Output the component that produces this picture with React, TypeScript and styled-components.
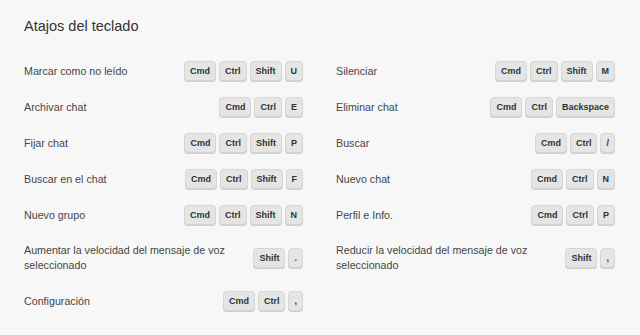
import styled, { createGlobalStyle } from 'styled-components'

const GlobalStyle = createGlobalStyle`
  html, body {
    margin: 0;
    padding: 0;
    background-color: #f7f7f7;
  }
  body {
    font-family: "Liberation Sans", Arial, sans-serif;
    -webkit-font-smoothing: antialiased;
  }
`

const Page = styled.div`
  min-height: 100vh;
  padding: 16px 25px 0 24px;
  box-sizing: border-box;
  background-color: #f7f7f7;
`

const Title = styled.h2`
  margin: 0 0 17px;
  font-size: 14.5px;
  line-height: 20px;
  font-weight: 400;
  color: #333;
`

const Grid = styled.div`
  display: grid;
  grid-template-columns: 279px 279px;
  column-gap: 33px;
`

const Row = styled.div`
  display: flex;
  align-items: center;
  justify-content: space-between;
  gap: 16px;
  padding: 8px 0;
`

const Label = styled.span`
  flex: 1;
  padding: 2px 0;
  font-size: 10.7px;
  line-height: 15px;
  color: #464646;
`

const Keys = styled.div`
  display: flex;
  flex-shrink: 0;
  gap: 3px;
`

const Key = styled.kbd`
  display: inline-flex;
  align-items: center;
  justify-content: center;
  height: 20px;
  padding: 0 5px;
  box-sizing: border-box;
  font-family: "Liberation Sans", Arial, sans-serif;
  font-size: 9px;
  font-weight: 700;
  color: #333;
  background-color: #e5e5e5;
  border: 1px solid #d6d6d6;
  border-radius: 4px;
  box-shadow: 0 1px 0 #cdcdcd;
`

type Shortcut = { label: string; keys: string[] }

const shortcuts: (Shortcut | null)[] = [
  { label: 'Marcar como no leído', keys: ['Cmd', 'Ctrl', 'Shift', 'U'] },
  { label: 'Silenciar', keys: ['Cmd', 'Ctrl', 'Shift', 'M'] },
  { label: 'Archivar chat', keys: ['Cmd', 'Ctrl', 'E'] },
  { label: 'Eliminar chat', keys: ['Cmd', 'Ctrl', 'Backspace'] },
  { label: 'Fijar chat', keys: ['Cmd', 'Ctrl', 'Shift', 'P'] },
  { label: 'Buscar', keys: ['Cmd', 'Ctrl', '/'] },
  { label: 'Buscar en el chat', keys: ['Cmd', 'Ctrl', 'Shift', 'F'] },
  { label: 'Nuevo chat', keys: ['Cmd', 'Ctrl', 'N'] },
  { label: 'Nuevo grupo', keys: ['Cmd', 'Ctrl', 'Shift', 'N'] },
  { label: 'Perfil e Info.', keys: ['Cmd', 'Ctrl', 'P'] },
  { label: 'Aumentar la velocidad del mensaje de voz seleccionado', keys: ['Shift', '.'] },
  { label: 'Reducir la velocidad del mensaje de voz seleccionado', keys: ['Shift', ','] },
  { label: 'Configuración', keys: ['Cmd', 'Ctrl', ','] },
  null,
]

export default function App() {
  return (
    <Page>
      <GlobalStyle />
      <Title>Atajos del teclado</Title>
      <Grid>
        {shortcuts.map((s, i) =>
          s ? (
            <Row key={i}>
              <Label>{s.label}</Label>
              <Keys>
                {s.keys.map((k, j) => <Key key={j}>{k}</Key>)}
              </Keys>
            </Row>
          ) : <div key={i} />
        )}
      </Grid>
    </Page>
  )
}
